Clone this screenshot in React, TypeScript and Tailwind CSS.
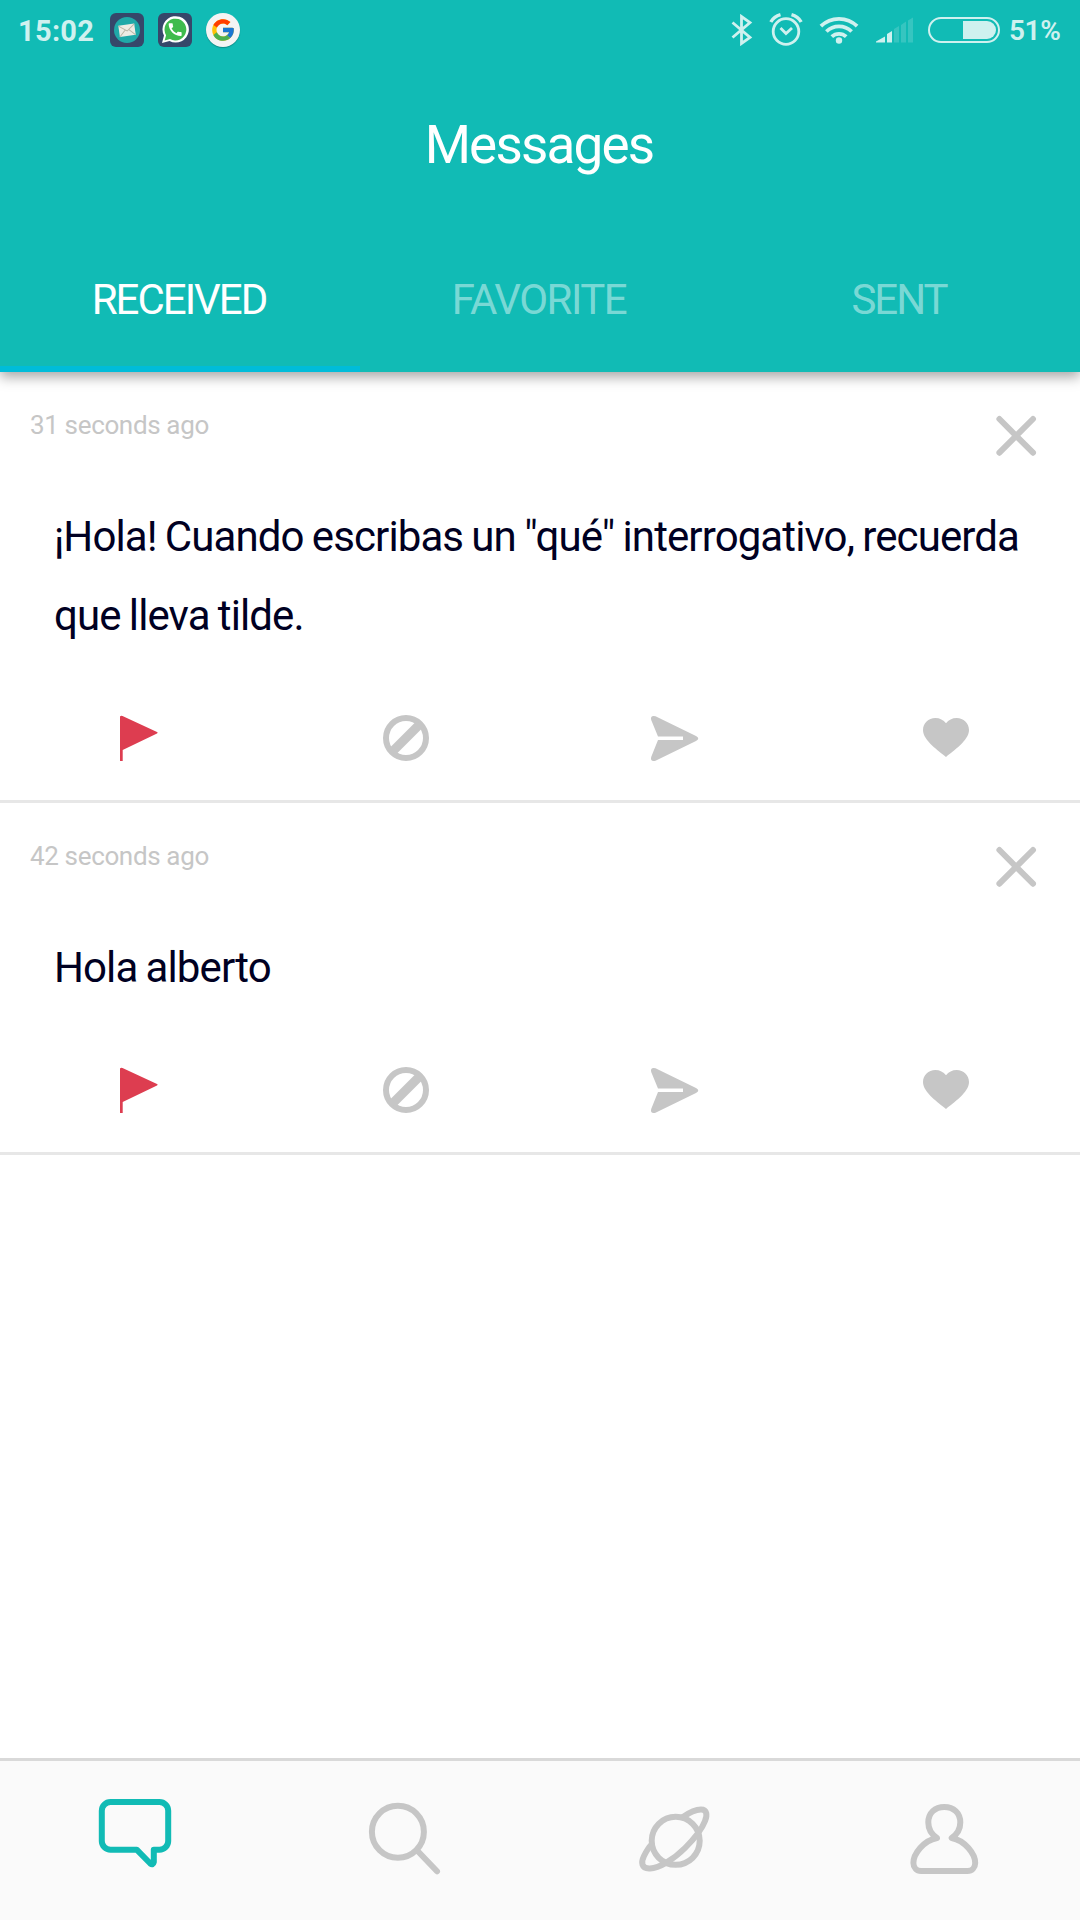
import { ReactNode, useState } from 'react'
import { FcGoogle } from 'react-icons/fc'

const TABS = ['RECEIVED', 'FAVORITE', 'SENT']

const TAB_SPACING = ['tracking-[-2px]', 'tracking-[-1.5px]', 'tracking-[-2px]']

const MESSAGES = [
  {
    id: 1,
    date: '31 seconds ago',
    text: '¡Hola! Cuando escribas un "qué" interrogativo, recuerda que lleva tilde.',
  },
  { id: 2, date: '42 seconds ago', text: 'Hola alberto' },
]

function StatusBar() {
  return (
    <div className="flex h-[60px] items-center text-[#cff1ef]">
      <span className="ml-[18px] w-[92px] pt-[2px] text-[29px] leading-[60px] font-bold tracking-[0.3px]">15:02</span>

      <svg className="h-[34px] w-[34px]" viewBox="0 0 34 34">
        <rect width="34" height="34" rx="6" fill="#36476a" />
        <circle cx="17" cy="17" r="13" fill="#1fa9a8" />
        <g transform="rotate(-8 17 17)">
          <rect x="9" y="11.5" width="16" height="11.5" fill="#eeece4" />
          <path d="M9 12l8 6 8-6M9 23l6-6M25 23l-6-6" fill="none" stroke="#b9b5a5" strokeWidth="1" />
        </g>
      </svg>

      <svg className="ml-[14px] h-[34px] w-[34px]" viewBox="0 0 34 34">
        <rect width="34" height="34" rx="6" fill="#36476a" />
        <path d="M4 30l2-7.5A13.2 13.2 0 1 1 11.5 28z" fill="#fff" />
        <path d="M6.6 27.4l1.5-5.2A10.9 10.9 0 1 1 12 26z" fill="#3fbb4d" />
        <path
          transform="translate(8.5 8) scale(.72)"
          fill="#fff"
          d="M20.01 15.38c-1.23 0-2.42-.2-3.53-.56a.977.977 0 0 0-1.01.24l-1.57 1.97c-2.83-1.35-5.48-3.9-6.89-6.83l1.95-1.66c.27-.28.35-.67.24-1.02-.37-1.11-.56-2.3-.56-3.53 0-.54-.45-.99-.99-.99H4.19C3.65 3 3 3.24 3 3.99 3 13.28 10.73 21 20.01 21c.71 0 .99-.63.99-1.18v-3.45c0-.54-.45-.99-.99-.99z"
        />
      </svg>

      <div className="ml-[14px] flex h-[34px] w-[34px] items-center justify-center rounded-full bg-[#f4f4f4] shadow-[0_1px_1px_rgba(0,0,0,0.25)]">
        <FcGoogle className="h-[26px] w-[26px]" />
      </div>

      {/* bluetooth */}
      <svg className="ml-auto h-[32px] w-[22px]" viewBox="0 0 22 32" fill="none" stroke="currentColor" strokeWidth="2.8">
        <path d="M1.5 8.5L19 23.5 10.5 29.5V2.5L19 8.5 1.5 23.5" />
      </svg>

      {/* alarm */}
      <svg className="ml-[16px] h-[34px] w-[34px]" viewBox="0 0 34 34" fill="none" stroke="currentColor" strokeWidth="2.8">
        <circle cx="17" cy="18.5" r="12.8" />
        <path d="M11.5 15l5.5 5.5 6-5.5" />
        <path d="M1.8 9Q5 3.5 11.5 1.7M32.2 9Q29 3.5 22.5 1.7" strokeWidth="3.4" />
      </svg>

      {/* wifi */}
      <svg className="ml-[16px] h-[28px] w-[40px]" viewBox="0 0 40 28" fill="none" stroke="currentColor" strokeWidth="3.8">
        <path d="M1.9 10.2a26 26 0 0 1 36.2 0M7.4 15.5a18 18 0 0 1 25.2 0M12.8 20.7a10.5 10.5 0 0 1 14.4 0" />
        <circle cx="20" cy="24.5" r="3.2" fill="currentColor" stroke="none" />
      </svg>

      {/* signal */}
      <svg className="ml-[17px] h-[26px] w-[38px]" viewBox="0 0 38 26" fill="currentColor">
        <path d="M0 25.5V24.5L9 19.5v6zM11 25.5v-8.5l5-3v11.5z" />
        <path opacity=".2" d="M18 25.5V12l5-3v16.5zM25 25.5V8l5-3.5v21zM32 25.5V3.5L37 .5v25z" />
      </svg>

      {/* battery */}
      <svg className="ml-[14px] h-[26px] w-[72px]" viewBox="0 0 72 26">
        <rect x="1" y="1" width="70" height="24" rx="12" fill="none" stroke="currentColor" strokeWidth="2" />
        <path d="M35 4h24a9 9 0 0 1 0 18H35z" fill="currentColor" />
      </svg>

      <span className="mr-[18px] ml-[9px] w-[53px] pt-[2px] text-[28px] leading-[60px] font-semibold tracking-[-0.4px]">51%</span>
    </div>
  )
}

function FlagIcon() {
  return (
    <svg className="h-[60px] w-[60px]" viewBox="0 0 60 60" fill="#dd3d50">
      <path d="M15 8.5Q16 7.5 17.5 8L52 24Q53.5 24.7 52 25.5L17.7 42V53H15z" />
    </svg>
  )
}

function BlockIcon() {
  return (
    <svg className="h-[60px] w-[60px]" viewBox="0 0 60 60" fill="none" stroke="#c6c6c6">
      <circle cx="31" cy="30" r="20" strokeWidth="6" />
      <path d="M17 44L45 16" strokeWidth="9" />
    </svg>
  )
}

function SendIcon() {
  return (
    <svg className="h-[60px] w-[60px]" viewBox="0 0 60 60" fill="#c6c6c6">
      <path d="M10.5 8.3L51 28Q55.5 30.5 51 33L10.5 52.7Q5 54 6.2 49L13 32H38V28.5H13L6.2 12Q5 7.2 10.5 8.3Z" />
    </svg>
  )
}

function HeartIcon() {
  return (
    <svg className="h-[60px] w-[60px]" viewBox="0 0 60 60" fill="#c6c6c6">
      <path d="M31 49C24 43 8 32.5 8 22C8 15 13.5 10 20.3 10C24.7 10 28.5 12 31 15.3C33.5 12 37.3 10 41.7 10C48.5 10 54 15 54 22C54 32.5 38 43 31 49Z" />
    </svg>
  )
}

function Message({ date, text }: { date: string; text: string }) {
  return (
    <article className="border-b-[3px] border-[#e7e7e7] pb-[32px]">
      <div className="flex h-[125px] items-start justify-between pr-[40px] pl-[30px]">
        <time className="mt-[33px] text-[26px] leading-[40px] tracking-[-0.35px] text-[#c6c6c6]">{date}</time>
        <button className="mt-[40px]" aria-label="Close">
          <svg className="h-[48px] w-[48px]" viewBox="0 0 48 48" stroke="#c6c6c6" strokeWidth="6" strokeLinecap="round">
            <path d="M7.4 7L41 40.7M41 7L7.4 40.7" />
          </svg>
        </button>
      </div>
      <p className="pr-[40px] pl-[54px] text-[42px] leading-[79px] tracking-[-0.9px] [word-spacing:-1.3px] text-[#000022]">
        {text}
      </p>
      <div className="mt-[53px] grid grid-cols-4 justify-items-center">
        <FlagIcon />
        <BlockIcon />
        <SendIcon />
        <HeartIcon />
      </div>
    </article>
  )
}

function NavIcon({ active, children }: { active?: boolean; children: ReactNode }) {
  return (
    <button className={active ? 'text-[#11bbb5]' : 'text-[#c6c6c6]'}>
      <svg
        className="h-[80px] w-[80px]"
        viewBox="0 0 80 80"
        fill="none"
        stroke="currentColor"
        strokeWidth="6"
        strokeLinecap="round"
        strokeLinejoin="round"
      >
        {children}
      </svg>
    </button>
  )
}

export default function App() {
  const [tab, setTab] = useState(0)

  return (
    <div className="flex h-[1920px] w-[1080px] flex-col overflow-hidden bg-white font-['Roboto',sans-serif]">
      <header className="relative z-10 h-[372px] shrink-0 bg-[#11bbb5] text-white shadow-[0_5px_12px_rgba(0,0,0,0.35)]">
        <StatusBar />
        <h1 className="h-[180px] pt-[55px] pr-[2px] text-center text-[53px] leading-[60px] tracking-[-1.8px]">Messages</h1>
        <nav className="grid grid-cols-3">
          {TABS.map((name, i) => (
            <button
              key={name}
              onClick={() => setTab(i)}
              className={`h-[132px] border-b-[6px] pr-[2px] pb-[6px] text-[42px] leading-[120px] ${TAB_SPACING[i]} ${
                tab === i ? 'border-[#00bcd9] text-white' : 'border-transparent text-white/45'
              }`}
            >
              {name}
            </button>
          ))}
        </nav>
      </header>

      <main className="flex-1">
        {MESSAGES.map((m) => (
          <Message key={m.id} date={m.date} text={m.text} />
        ))}
      </main>

      <footer className="grid h-[162px] shrink-0 grid-cols-4 items-start justify-items-center border-t-[3px] border-[#d9d9d9] bg-[#fafafa] pt-[36px]">
        <NavIcon active>
          <path d="M15.5 5H64.5a8.7 8.7 0 0 1 8.7 8.7V44a8.7 8.7 0 0 1-8.7 8.7H58.8V65q-.8 3.5-3.5 1.5L41.7 52.7H15.5A8.7 8.7 0 0 1 6.8 44V13.7A8.7 8.7 0 0 1 15.5 5Z" />
        </NavIcon>
        <NavIcon>
          <circle cx="32.9" cy="34.7" r="26" />
          <path d="M52.4 53.7L72 74.3" />
        </NavIcon>
        <NavIcon>
          <circle cx="40.7" cy="43.8" r="24" />
          <path d="M48 20C55 15 62 12.5 66 12.5C72 12.5 72.5 18 70 24C67 32 60 41 50 51C38 63 24 71 15 71.5C6 72 6 65 9 59C11 55 13 51 16.5 47.5" />
        </NavIcon>
        <NavIcon>
          <path d="M32 41C26 37 23.3 31 23.3 25.5C23.3 16 30 10 39.3 10C48.6 10 55.3 16 55.3 25.5C55.3 31 52.5 37 46.7 41C60 43.5 70.2 57 70.2 66C70.2 70.5 67 74 62.5 74H16.1C11.6 74 8.4 70.5 8.4 66C8.4 57 18.5 43.5 32 41Z" />
        </NavIcon>
      </footer>
    </div>
  )
}
